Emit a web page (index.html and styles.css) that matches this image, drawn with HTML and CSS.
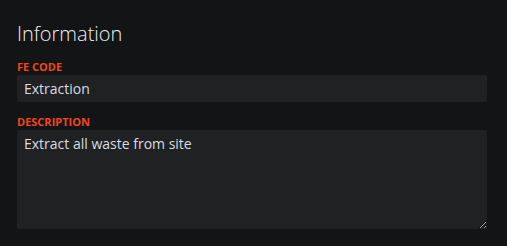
FILE: index.html
```html
<!DOCTYPE html>
<html>
<head>
<meta charset="utf-8">
<link rel="stylesheet" href="styles.css">
</head>
<body>
<div class="panel">
  <h2 class="title">Information</h2>
  <label class="label" for="fe">FE CODE</label>
  <input id="fe" class="field" type="text" value="Extraction">
  <label class="label" for="desc">DESCRIPTION</label>
  <textarea id="desc" class="field area">Extract all waste from site</textarea>
</div>
</body>
</html>
```
FILE: styles.css
```css
html, body {
  margin: 0;
  padding: 0;
  background: #131416;
  height: 100%;
}
body {
  font-family: "Open Sans", "Liberation Sans", sans-serif;
  color: #d9dde1;
}
.panel {
  display: flex;
  flex-direction: column;
  padding: 20px 20px 0 17px;
}
.title {
  margin: 0;
  font-size: 20px;
  font-weight: 300;
  line-height: 27px;
  color: #eceef0;
}
.label {
  margin-top: 11px;
  font-size: 11px;
  font-weight: 700;
  line-height: 17px;
  color: #f0461c;
}
.field {
  box-sizing: border-box;
  width: 470px;
  margin: 0;
  border: none;
  outline: none;
  background: #202123;
  color: #d9dde1;
  font-family: "Open Sans", "Liberation Sans", sans-serif;
  font-size: 14px;
}
input.field {
  height: 27px;
  padding: 0 7px;
}
.area {
  height: 99px;
  padding: 4px 7px;
  resize: vertical;
  line-height: 20px;
}
```
